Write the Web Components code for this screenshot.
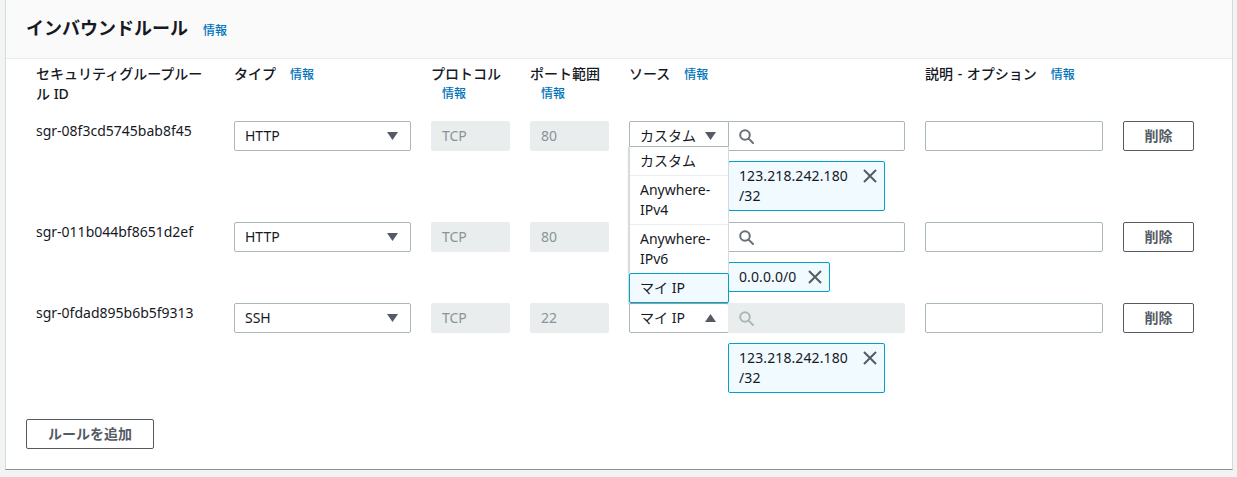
<!DOCTYPE html>
<html lang="ja">
<head>
<meta charset="utf-8">
<title>インバウンドルール</title>
<style>
  html, body { margin: 0; height: 100%; background: #f2f3f3; }
  body {
    font: 14px/20px "Noto Sans", "Noto Sans CJK JP", sans-serif;
    color: #16191f;
    overflow: hidden;
  }
</style>
</head>
<body>
<rules-panel>
  <span slot="title">インバウンドルール</span>
  <rule-head></rule-head>
  <rule-row rule-id="sgr-08f3cd5745bab8f45" type="HTTP" proto="TCP" port="80" source="カスタム" chip="123.218.242.180 /32" menu></rule-row>
  <rule-row rule-id="sgr-011b044bf8651d2ef" type="HTTP" proto="TCP" port="80" source="" chip="0.0.0.0/0" narrow></rule-row>
  <rule-row rule-id="sgr-0fdad895b6b5f9313" type="SSH" proto="TCP" port="22" source="マイ IP" chip="123.218.242.180 /32" up locked></rule-row>
</rules-panel>

<script>
const GRID = '178px 177px 79px 79px 276px 178px 71px';

class InfoLink extends HTMLElement {
  constructor() {
    super();
    this.attachShadow({ mode: 'open' });
    this.shadowRoot.innerHTML = `
      <style>
        :host { display: inline-block; font-size: 12px; font-weight: 500; color: #0073bb; line-height: 20px; }
      </style>
      情報
    `;
  }
}
customElements.define('info-link', InfoLink);

class AwsButton extends HTMLElement {
  constructor() {
    super();
    this.attachShadow({ mode: 'open' });
    this.shadowRoot.innerHTML = `
      <style>
        :host {
          display: flex;
          align-items: center;
          justify-content: center;
          box-sizing: border-box;
          height: 30px;
          border: 1px solid #545b64;
          border-radius: 2px;
          background: #fff;
          color: #545b64;
          font-weight: 700;
          font-size: 14px;
        }
      </style>
      <slot></slot>
    `;
  }
}
customElements.define('aws-button', AwsButton);

class AwsSelect extends HTMLElement {
  constructor() {
    super();
    this.attachShadow({ mode: 'open' });
    this.shadowRoot.innerHTML = `
      <style>
        :host {
          display: flex;
          align-items: center;
          justify-content: space-between;
          box-sizing: border-box;
          height: 30px;
          padding: 0 12px 0 10px;
          border: 1px solid #aab7b8;
          border-radius: 2px;
          background: #fff;
          white-space: nowrap;
        }
        svg { width: 11px; height: 8px; fill: #545b64; flex: none; }
        :host([up]) svg { transform: rotate(180deg); }
      </style>
      <slot></slot>
      <svg viewBox="0 0 11 8"><path d="M0 0h11L5.5 8z"/></svg>
    `;
  }
}
customElements.define('aws-select', AwsSelect);

class SearchBox extends HTMLElement {
  constructor() {
    super();
    this.attachShadow({ mode: 'open' });
    this.shadowRoot.innerHTML = `
      <style>
        :host {
          display: flex;
          align-items: center;
          box-sizing: border-box;
          height: 30px;
          padding-left: 10px;
          border: 1px solid #aab7b8;
          border-radius: 0 2px 2px 0;
          background: #fff;
          color: #687078;
        }
        :host([locked]) { background: #eaeded; border-color: #eaeded; color: #aab7b8; }
        svg { width: 15px; height: 15px; fill: none; stroke: currentColor; stroke-width: 2; }
      </style>
      <svg viewBox="0 0 15 15"><circle cx="6" cy="6" r="4.8"/><path d="M9.6 9.6L14 14" stroke-linecap="round"/></svg>
    `;
  }
}
customElements.define('search-box', SearchBox);

class TokenChip extends HTMLElement {
  constructor() {
    super();
    this.attachShadow({ mode: 'open' });
    this.shadowRoot.innerHTML = `
      <style>
        :host {
          display: flex;
          align-items: flex-start;
          justify-content: space-between;
          box-sizing: border-box;
          width: 157px;
          padding: 4px 6px 4px 10px;
          border: 1px solid #00a1c9;
          border-radius: 2px;
          background: #f1faff;
          letter-spacing: .1px;
        }
        :host([narrow]) { width: max-content; gap: 11px; }
        .txt { display: block; width: 120px; }
        :host([narrow]) .txt { width: auto; }
        svg { width: 16px; height: 16px; margin-top: 2px; fill: none; stroke: #545b64; stroke-width: 2; flex: none; }
      </style>
      <span class="txt"><slot></slot></span>
      <svg viewBox="0 0 16 16"><path d="M2 2l12 12M14 2L2 14"/></svg>
    `;
  }
}
customElements.define('token-chip', TokenChip);

class SourceMenu extends HTMLElement {
  constructor() {
    super();
    this.attachShadow({ mode: 'open' });
    this.shadowRoot.innerHTML = `
      <style>
        :host {
          display: block;
          position: absolute;
          z-index: 5;
          left: 0;
          top: 25px;
          box-sizing: border-box;
          width: 100px;
          background: #fff;
          border-left: 1px solid #d5dbdb;
          border-right: 1px solid #d5dbdb;
          border-top: 1px solid #aab7b8;
          box-shadow: -1px 1px 1px rgba(0, 28, 36, .15);
        }
        div { padding: 4px 10px; border-bottom: 1px solid #eaeded; }
        div.sel {
          margin: -1px -1px 0;
          padding: 4px 10px;
          border: 1px solid #00a1c9;
          border-radius: 2px;
          background: #f1faff;
        }
      </style>
      <div>カスタム</div>
      <div>Anywhere-IPv4</div>
      <div>Anywhere-IPv6</div>
      <div class="sel">マイ IP</div>
    `;
  }
}
customElements.define('source-menu', SourceMenu);

class RuleHead extends HTMLElement {
  constructor() {
    super();
    this.attachShadow({ mode: 'open' });
    this.shadowRoot.innerHTML = `
      <style>
        :host {
          display: grid;
          grid-template-columns: ${GRID};
          column-gap: 20px;
          height: 57px;
        }
        .h { font-weight: 500; }
        .h info-link { margin-left: 14px; }
        .wrap info-link { display: block; margin-left: 11px; }
        .desc { word-spacing: 1px; }
      </style>
      <div class="h">セキュリティグループルール ID</div>
      <div class="h">タイプ<info-link></info-link></div>
      <div class="h wrap">プロトコル<info-link></info-link></div>
      <div class="h wrap">ポート範囲<info-link></info-link></div>
      <div class="h">ソース<info-link></info-link></div>
      <div class="h desc">説明 - オプション<info-link></info-link></div>
      <div></div>
    `;
  }
}
customElements.define('rule-head', RuleHead);

class RuleRow extends HTMLElement {
  connectedCallback() {
    const a = (n) => this.getAttribute(n) || '';
    const menu = this.hasAttribute('menu');
    const up = this.hasAttribute('up');
    const locked = this.hasAttribute('locked');
    const narrow = this.hasAttribute('narrow');
    this.attachShadow({ mode: 'open' });
    this.shadowRoot.innerHTML = `
      <style>
        :host {
          display: grid;
          grid-template-columns: ${GRID};
          column-gap: 20px;
          margin-bottom: 11px;
        }
        .ro {
          box-sizing: border-box;
          height: 30px;
          padding: 5px 11px;
          border-radius: 2px;
          background: #eaeded;
          color: #879596;
        }
        .src { position: relative; }
        .ctl { display: grid; grid-template-columns: 100px 1fr; height: 30px; }
        search-box { margin-left: -1px; }
        .tokens { margin: 10px 0 0 99px; }
        .desc { box-sizing: border-box; height: 30px; border: 1px solid #aab7b8; border-radius: 2px; background: #fff; }
      </style>
      <div class="id">${a('rule-id')}</div>
      <aws-select>${a('type')}</aws-select>
      <div class="ro">${a('proto')}</div>
      <div class="ro">${a('port')}</div>
      <div class="src">
        <div class="ctl">
          <aws-select ${up ? 'up' : ''}>${a('source')}</aws-select>
          <search-box ${locked ? 'locked' : ''}></search-box>
        </div>
        ${menu ? '<source-menu></source-menu>' : ''}
        <div class="tokens"><token-chip ${narrow ? 'narrow' : ''}>${a('chip')}</token-chip></div>
      </div>
      <div class="desc"></div>
      <aws-button>削除</aws-button>
    `;
  }
}
customElements.define('rule-row', RuleRow);

class RulesPanel extends HTMLElement {
  constructor() {
    super();
    this.attachShadow({ mode: 'open' });
    this.shadowRoot.innerHTML = `
      <style>
        :host {
          display: block;
          box-sizing: border-box;
          height: 470px;
          margin: 0 4px 0 5px;
          background: #fff;
          border-left: 1px solid #d5dbdb;
          border-right: 1px solid #d5dbdb;
          border-bottom: 1px solid #879596;
        }
        header {
          display: flex;
          align-items: baseline;
          gap: 15px;
          box-sizing: border-box;
          height: 59px;
          padding: 16px 20px 0;
          background: #fafafa;
          border-bottom: 1px solid #eaeded;
        }
        h2 { margin: 0; font-size: 18px; line-height: 24px; font-weight: 700; }
        main { padding: 5px 0 0 30px; }
        footer { margin-top: 26px; padding-left: 20px; }
        aws-button { width: 128px; }
      </style>
      <header><h2><slot name="title"></slot></h2><info-link></info-link></header>
      <main><slot></slot></main>
      <footer><aws-button>ルールを追加</aws-button></footer>
    `;
  }
}
customElements.define('rules-panel', RulesPanel);
</script>
</body>
</html>
